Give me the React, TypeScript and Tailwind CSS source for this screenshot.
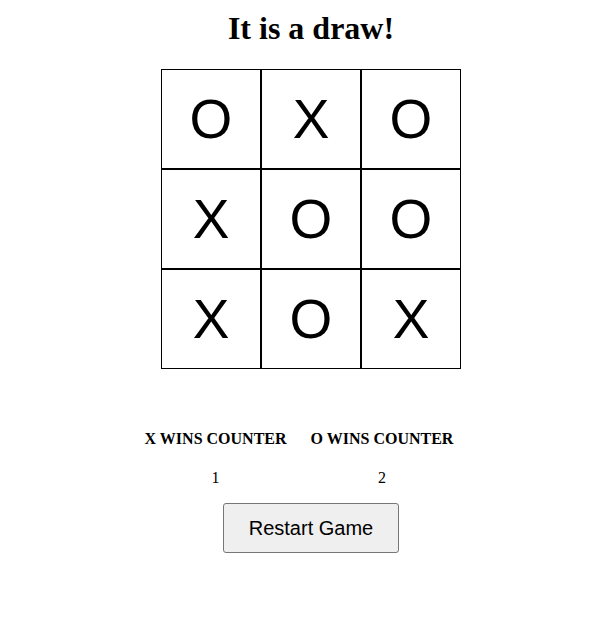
const board = ['O', 'X', 'O', 'X', 'O', 'O', 'X', 'O', 'X'];

export default function App() {
  return (
    <div className="min-h-screen bg-white pl-[13px] flex flex-col items-center">
      {/* title */}
      <h1 className="mt-[10px] text-[32px] leading-[37px] font-bold text-black font-['Liberation_Serif',serif]">
        It is a draw!
      </h1>

      {/* board */}
      <div className="mt-[22px] grid grid-cols-3 w-[300px]">
        {board.map((v, i) => (
          <div
            key={i}
            className="w-[100px] h-[100px] border border-black flex items-center justify-center text-[55px] leading-none text-black font-['Liberation_Sans',Arial,sans-serif]"
          >
            {v}
          </div>
        ))}
      </div>

      {/* counters */}
      <div className="mt-[61px] mr-[24px] flex gap-[24px] font-['Liberation_Serif',serif] text-black text-[16px]">
        <div className="flex flex-col items-center">
          <span className="font-bold leading-[18px]">X WINS COUNTER</span>
          <span className="mt-[21px] leading-[18px]">1</span>
        </div>
        <div className="flex flex-col items-center">
          <span className="font-bold leading-[18px]">O WINS COUNTER</span>
          <span className="mt-[21px] leading-[18px]">2</span>
        </div>
      </div>

      <button className="mt-[16px] w-[176px] h-[50px] bg-[#efefef] border border-[#767676] rounded-[3px] text-[20px] text-black font-['Liberation_Sans',Arial,sans-serif]">
        Restart Game
      </button>
    </div>
  );
}
